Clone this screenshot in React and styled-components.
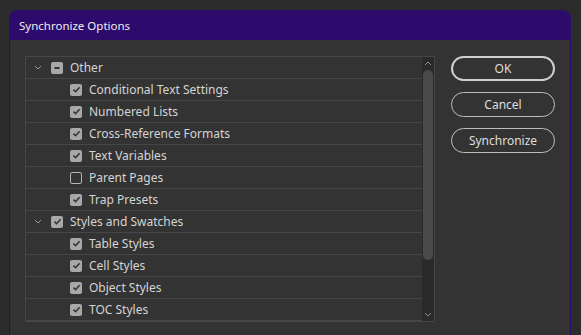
import React from "react"
import styled, { createGlobalStyle } from "styled-components"

const GlobalStyle = createGlobalStyle`
  html, body {
    margin: 0;
    padding: 0;
    background: #2c2c2c;
    height: 100%;
    overflow: hidden;
  }
  body {
    font-family: "Noto Sans", "Open Sans", sans-serif;
  }
`

const Window = styled.div`
  margin: 10px 0 0 9px;
  width: 560px;
  height: 340px;
  background: #333333;
  border: 1px solid #2d0b6c;
  border-bottom: none;
  border-radius: 8px 8px 0 0;
  overflow: hidden;
`

const TitleBar = styled.div`
  height: 29px;
  background: #2d0b6c;
  display: flex;
  align-items: center;
  padding-left: 9px;
  color: #ececec;
  font-size: 11.5px;
`

const Body = styled.div`
  display: flex;
  gap: 16px;
  padding: 16px 15px 0 15px;
`

const Panel = styled.div`
  width: 408px;
  display: flex;
  border: 1px solid #464646;
`

const List = styled.div`
  flex: 1;
`

const Row = styled.div`
  height: 21px;
  border-bottom: 1px solid #464646;
  display: flex;
  align-items: center;
  padding-left: ${p => (p.$child ? 44 : 7)}px;
  color: #d4d4d4;
  font-size: 12px;
`

const Twist = styled.span`
  width: 10px;
  display: flex;
  justify-content: center;
  margin-right: 8px;
`

const Box = styled.span`
  width: 12px;
  height: 12px;
  box-sizing: border-box;
  border-radius: 2px;
  margin-right: 7px;
  display: flex;
  align-items: center;
  justify-content: center;
  background: ${p => (p.$state === "off" ? "transparent" : "#a8a8a8")};
  border: ${p => (p.$state === "off" ? "1.5px solid #b4b4b4" : "none")};
`

const Scrollbar = styled.div`
  width: 12px;
  background: #2a2a2a;
  display: flex;
  flex-direction: column;
  align-items: center;
`

const Arrow = styled.div`
  height: 13px;
  display: flex;
  align-items: center;
  justify-content: center;
`

const Track = styled.div`
  flex: 1;
  width: 100%;
  display: flex;
  justify-content: center;
`

const Thumb = styled.div`
  width: 10px;
  height: 190px;
  border-radius: 5px;
  background: #4a4a4a;
`

const Buttons = styled.div`
  display: flex;
  flex-direction: column;
  gap: 11px;
  padding-top: 0;
`

const Button = styled.button`
  width: 104px;
  height: 25px;
  box-sizing: border-box;
  border-radius: 13px;
  background: transparent;
  border: ${p => (p.$primary ? "2px solid #d0d0d0" : "1px solid #bdbdbd")};
  color: #dedede;
  font-family: "Noto Sans", "Open Sans", sans-serif;
  font-size: 12px;
  padding: 0;
`

const Chevron = ({ up, color = "#8c8c8c" }) => (
  <svg width="8" height="5" viewBox="0 0 8 5">
    <path
      d={up ? "M1 4 L4 1 L7 4" : "M1 1 L4 4 L7 1"}
      fill="none"
      stroke={color}
      strokeWidth="1"
    />
  </svg>
)

const Mark = ({ state }) => {
  if (state === "off") return <Box $state="off" />
  return (
    <Box $state={state}>
      {state === "mixed" ? (
        <svg width="8" height="8" viewBox="0 0 8 8">
          <path d="M1.5 4 H6.5" stroke="#333" strokeWidth="2" />
        </svg>
      ) : (
        <svg width="9" height="9" viewBox="0 0 9 9">
          <path d="M1.5 4.6 L3.6 6.7 L7.6 2.2" fill="none" stroke="#333" strokeWidth="1.6" />
        </svg>
      )}
    </Box>
  )
}

const items = [
  { label: "Other", group: true, state: "mixed" },
  { label: "Conditional Text Settings", state: "on" },
  { label: "Numbered Lists", state: "on" },
  { label: "Cross-Reference Formats", state: "on" },
  { label: "Text Variables", state: "on" },
  { label: "Parent Pages", state: "off" },
  { label: "Trap Presets", state: "on" },
  { label: "Styles and Swatches", group: true, state: "on" },
  { label: "Table Styles", state: "on" },
  { label: "Cell Styles", state: "on" },
  { label: "Object Styles", state: "on" },
  { label: "TOC Styles", state: "on" },
]

const App = () => (
  <>
    <GlobalStyle />
    <Window>
      <TitleBar>Synchronize Options</TitleBar>
      <Body>
        <Panel>
          <List>
            {items.map(item => (
              <Row key={item.label} $child={!item.group}>
                {item.group && (
                  <Twist>
                    <Chevron color="#9a9a9a" />
                  </Twist>
                )}
                <Mark state={item.state} />
                {item.label}
              </Row>
            ))}
          </List>
          <Scrollbar>
            <Arrow>
              <Chevron up />
            </Arrow>
            <Track>
              <Thumb />
            </Track>
            <Arrow>
              <Chevron />
            </Arrow>
          </Scrollbar>
        </Panel>
        <Buttons>
          <Button $primary>OK</Button>
          <Button>Cancel</Button>
          <Button>Synchronize</Button>
        </Buttons>
      </Body>
    </Window>
  </>
)

export default App
